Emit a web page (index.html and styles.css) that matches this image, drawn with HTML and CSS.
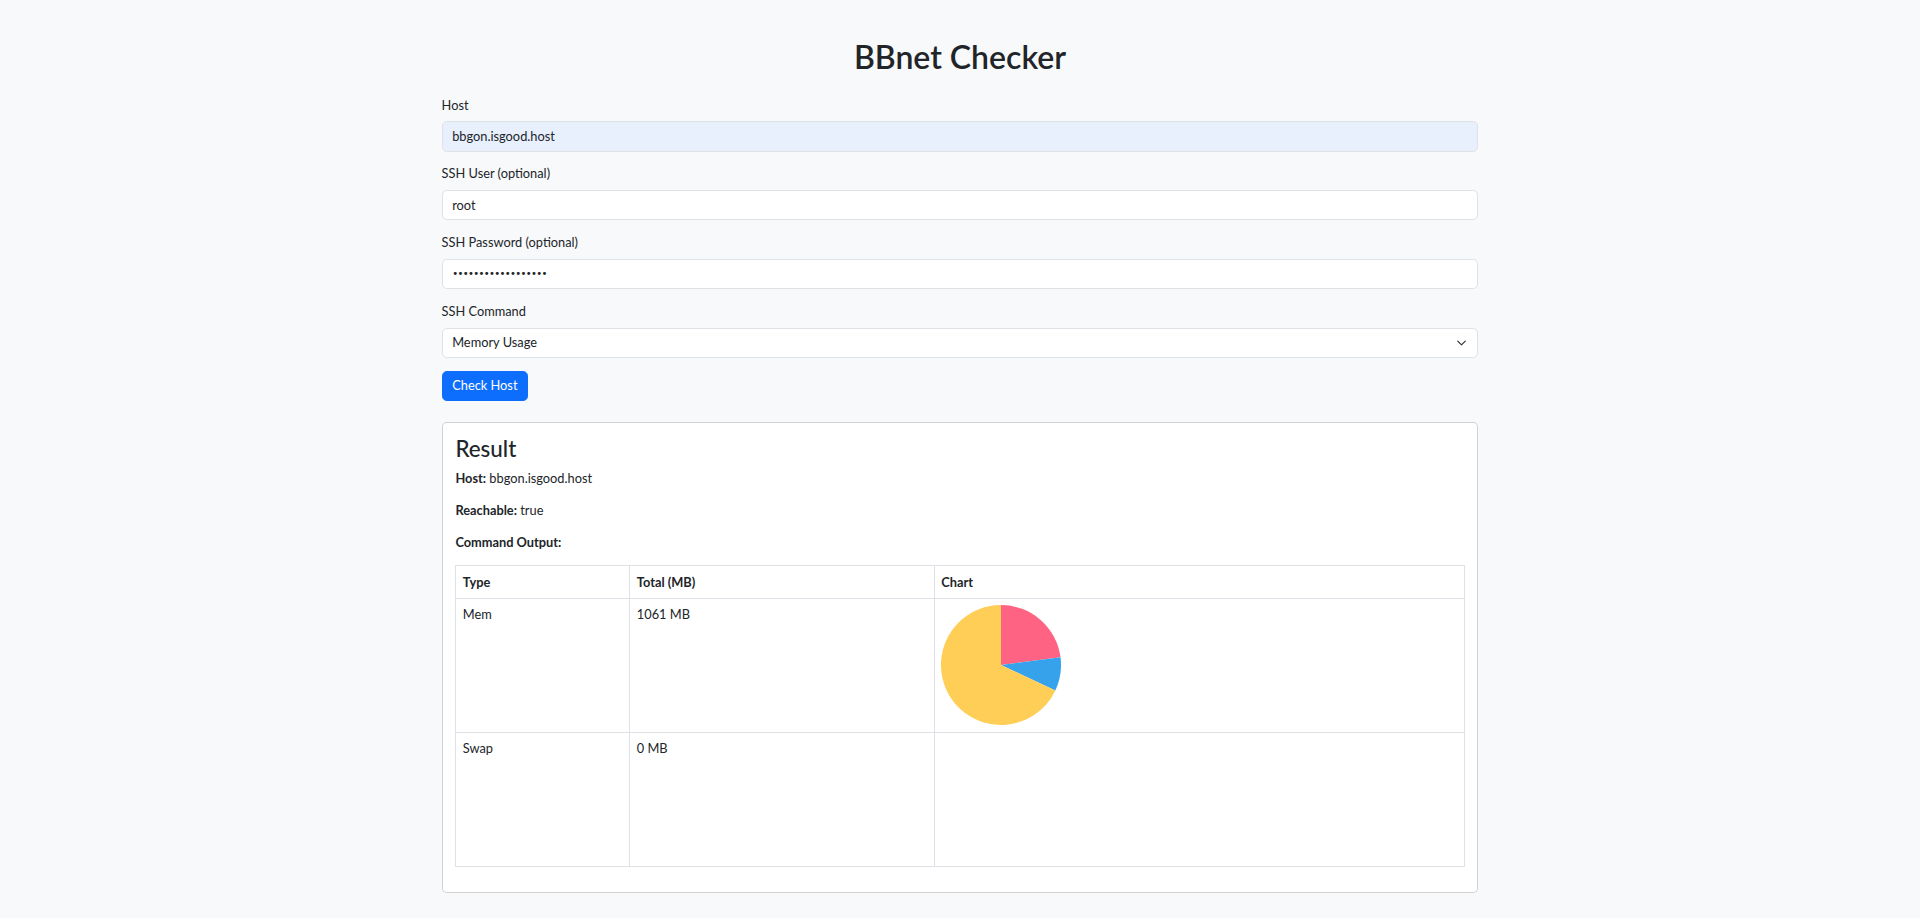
FILE: index.html
```html
<!DOCTYPE html>
<html lang="en">
<head>
<meta charset="utf-8">
<title>BBnet Checker</title>
<link rel="stylesheet" href="styles.css">
</head>
<body>
<div class="container">
  <h1 class="title">BBnet Checker</h1>
  <form class="form">
    <div class="field">
      <label class="label" for="host">Host</label>
      <input class="input input-autofill" id="host" type="text" value="bbgon.isgood.host">
    </div>
    <div class="field">
      <label class="label" for="user">SSH User (optional)</label>
      <input class="input" id="user" type="text" value="root">
    </div>
    <div class="field">
      <label class="label" for="pass">SSH Password (optional)</label>
      <input class="input input-pass" id="pass" type="password" value="xxxxxxxxxxxxxxxxxx">
    </div>
    <div class="field">
      <label class="label" for="cmd">SSH Command</label>
      <div class="select-wrap">
        <select class="input select" id="cmd">
          <option>Memory Usage</option>
        </select>
        <svg class="chevron" width="13" height="10" viewBox="0 0 16 16"><path d="M2 5l6 6 6-6" fill="none" stroke="#343a40" stroke-width="2" stroke-linecap="round" stroke-linejoin="round"/></svg>
      </div>
    </div>
    <button class="btn" type="button">Check Host</button>
  </form>

  <div class="card">
    <div class="card-body">
      <h3 class="card-title">Result</h3>
      <p class="line"><strong>Host:</strong> bbgon.isgood.host</p>
      <p class="line"><strong>Reachable:</strong> true</p>
      <p class="line"><strong>Command Output:</strong></p>
      <table class="table">
        <thead>
          <tr><th class="c1">Type</th><th class="c2">Total (MB)</th><th class="c3">Chart</th></tr>
        </thead>
        <tbody>
          <tr>
            <td>Mem</td>
            <td>1061 MB</td>
            <td>
              <svg class="pie" width="120" height="120" viewBox="0 0 120 120">
                <path d="M60 60 L60 0 A60 60 0 0 1 119.5 52.27 Z" fill="#FF6384"/>
                <path d="M60 60 L119.5 52.27 A60 60 0 0 1 114.33 85.45 Z" fill="#36A2EB"/>
                <path d="M60 60 L114.33 85.45 A60 60 0 1 1 60 0 Z" fill="#FFCE56"/>
              </svg>
            </td>
          </tr>
          <tr>
            <td>Swap</td>
            <td>0 MB</td>
            <td><div class="pie-empty"></div></td>
          </tr>
        </tbody>
      </table>
    </div>
  </div>
</div>
</body>
</html>
```
FILE: styles.css
```css
* { box-sizing: border-box; }
html, body { margin: 0; padding: 0; }
body {
  background: #f8f9fa;
  color: #212529;
  font-family: Lato, "Liberation Sans", sans-serif;
  font-size: 12.8px;
  line-height: 1.5;
}
.container {
  width: 1056px;
  margin: 0 auto;
  padding: 38px 9.6px 0;
}
.title {
  margin: 0 0 19.2px;
  font-size: 32px;
  font-weight: 600;
  line-height: 1.2;
  text-align: center;
}
.form { margin: 0; }
.field { margin-bottom: 12.8px; }
.label {
  display: block;
  margin-bottom: 6.4px;
  font-size: 12.8px;
  line-height: 19.2px;
}
.input {
  display: block;
  width: 100%;
  height: 30.4px;
  padding: 4.6px 9.6px;
  font-family: inherit;
  font-size: 12.8px;
  line-height: 19.2px;
  color: #212529;
  background: #fff;
  border: 1px solid #dee2e6;
  border-radius: 4.8px;
  outline: none;
}
.input-autofill { background: #e8f0fe; }
.input-pass { font-family: "DejaVu Sans", sans-serif; letter-spacing: -0.65px; font-size: 10px; }
.select-wrap { position: relative; }
.select {
  appearance: none;
  -webkit-appearance: none;
  padding-right: 32px;
}
.chevron {
  position: absolute;
  right: 10px;
  top: 10px;
}
.btn {
  display: inline-block;
  height: 30px;
  padding: 4.4px 9.6px;
  font-family: inherit;
  font-size: 12.8px;
  line-height: 19.2px;
  color: #fff;
  background: #0d6efd;
  border: 1px solid #0d6efd;
  border-radius: 4.8px;
}
.card {
  margin-top: 21.4px;
  background: #fff;
  border: 1px solid rgba(0,0,0,.175);
  border-radius: 4.8px;
}
.card-body { padding: 12.8px; }
.card-title {
  margin: 0 0 6.4px;
  font-size: 22.4px;
  font-weight: 500;
  line-height: 1.2;
}
.line { margin: 0 0 12.8px; }
.line strong { font-weight: 700; }
.table {
  width: 100%;
  border-collapse: collapse;
  margin-bottom: 12.8px;
  vertical-align: top;
}
.table th, .table td {
  border: 1px solid #dee2e6;
  padding: 6.4px;
  text-align: left;
  vertical-align: top;
  font-size: 12.8px;
  line-height: 19.2px;
}
.table th { font-weight: 700; }
.c1 { width: 174px; }
.c2 { width: 304.5px; }
.pie { display: block; }
.pie-empty { height: 120px; }
```
